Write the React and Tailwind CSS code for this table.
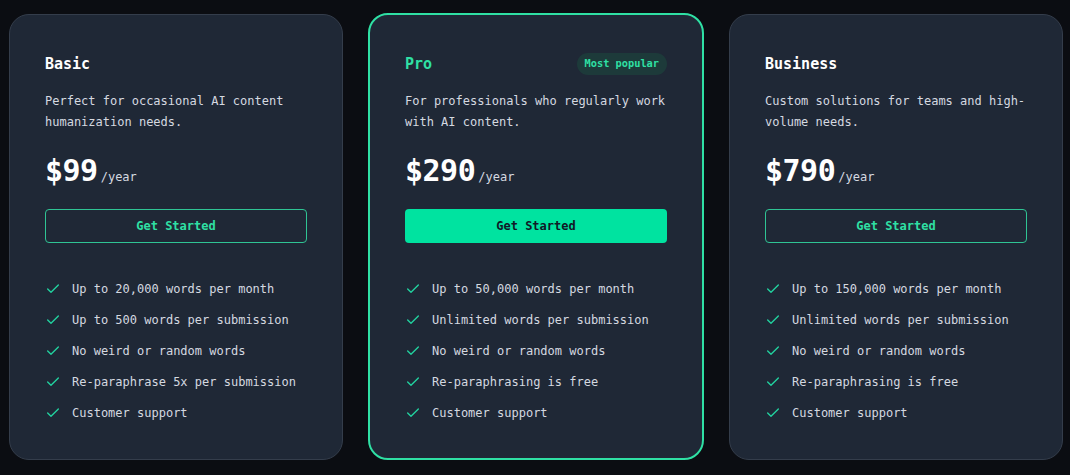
import React from 'react';

const plans = [
  {
    name: 'Basic',
    desc: 'Perfect for occasional AI content humanization needs.',
    price: '$99',
    features: [
      'Up to 20,000 words per month',
      'Up to 500 words per submission',
      'No weird or random words',
      'Re-paraphrase 5x per submission',
      'Customer support',
    ],
  },
  {
    name: 'Pro',
    popular: true,
    desc: 'For professionals who regularly work with AI content.',
    price: '$290',
    features: [
      'Up to 50,000 words per month',
      'Unlimited words per submission',
      'No weird or random words',
      'Re-paraphrasing is free',
      'Customer support',
    ],
  },
  {
    name: 'Business',
    desc: 'Custom solutions for teams and high-volume needs.',
    price: '$790',
    features: [
      'Up to 150,000 words per month',
      'Unlimited words per submission',
      'No weird or random words',
      'Re-paraphrasing is free',
      'Customer support',
    ],
  },
];

function Check() {
  return (
    <svg width="16" height="16" viewBox="0 0 24 24" fill="none" stroke="#22d3a0" strokeWidth="2" strokeLinecap="round" strokeLinejoin="round" className="shrink-0">
      <path d="M20 6 9 17l-5-5" />
    </svg>
  );
}

function Card({ plan }) {
  const pro = plan.popular;
  return (
    <div
      className={
        'rounded-[20px] bg-[#1f2836] pt-[36px] pb-[35px] ' +
        (pro ? 'border-2 border-[#2fe0a4] -mt-px -mx-px px-[35px]' : 'border border-[#343d4b] px-[35px]')
      }
    >
      <div className="flex items-center justify-between h-[26px]">
        <h3 className={'text-[15px] font-bold ' + (pro ? 'text-[#2fe0a4]' : 'text-white')}>{plan.name}</h3>
        {pro && (
          <span className="rounded-full bg-[#1d3a3a] px-[8px] h-[22px] flex items-center text-[10.3px] font-bold text-[#2fe0a4]">
            Most popular
          </span>
        )}
      </div>
      <p className="mt-[14px] -mr-3 text-[12px] leading-[21px] text-[#d5d9e0]">{plan.desc}</p>
      <div className="mt-5 flex items-baseline gap-[3px]">
        <span className="text-[30px] leading-[36px] font-bold text-white tracking-[-0.5px]">{plan.price}</span>
        <span className="text-[12px] text-[#d5d9e0]">/year</span>
      </div>
      <button
        className={
          'mt-[20px] w-full h-[34px] rounded-[4px] text-[12px] font-bold ' +
          (pro ? 'bg-[#00e3a0] text-[#111827]' : 'border border-[#2fc494] text-[#2fe0a4]')
        }
      >
        Get Started
      </button>
      <ul className="mt-[36px] flex flex-col gap-[11px]">
        {plan.features.map((f) => (
          <li key={f} className="flex items-center gap-[11px] h-5 text-[12px] text-[#d5d9e0]">
            <Check />
            <span>{f}</span>
          </li>
        ))}
      </ul>
    </div>
  );
}

export default function App() {
  return (
    <div
      className="min-h-[475px] bg-[#0b0d12] px-[9px] pt-[14px] pb-4"
      style={{ fontFamily: '"DejaVu Sans Mono", "Liberation Mono", monospace' }}
    >
      <div className="grid grid-cols-3 gap-[26px] w-[1054px]">
        {plans.map((p) => (
          <Card key={p.name} plan={p} />
        ))}
      </div>
    </div>
  );
}
